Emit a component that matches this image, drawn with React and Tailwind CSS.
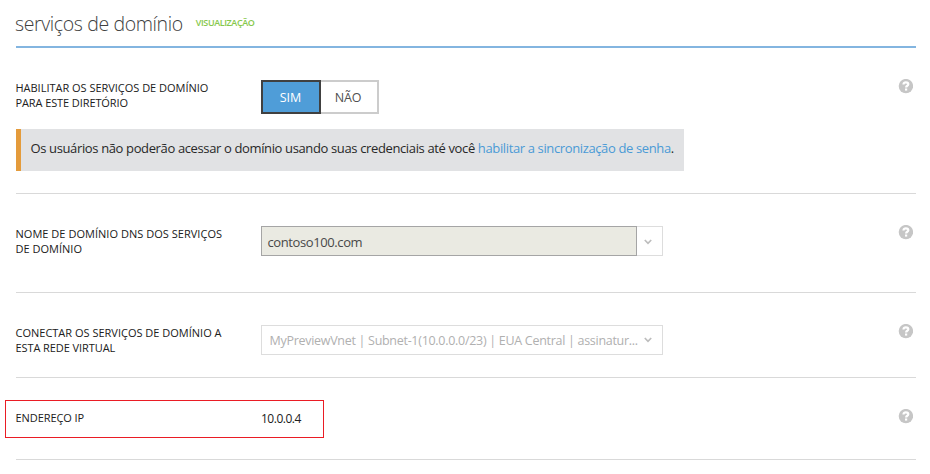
const Help = () => (
  <svg className="mt-[31px] mr-[3px] ml-auto h-[15px] w-[15px] shrink-0" viewBox="0 0 15 15">
    <circle cx="7.9" cy="7.1" r="7.2" fill="#c6c6c6" />
    <path d="M5.5 5.5C5.5 4 6.4 3.3 7.9 3.3s2.4.7 2.4 1.9c0 1.6-2.2 1.5-2.2 3.2" fill="none" stroke="#fff" strokeWidth="2.2" />
    <rect x="7" y="9.5" width="2.2" height="2.1" fill="#fff" />
  </svg>
);

const Chevron = () => (
  <svg className="h-[6px] w-[8px] shrink-0" viewBox="0 0 8 6">
    <path d="M.8 1 4 4.3 7.2 1" fill="none" stroke="#bdbdbd" strokeWidth="1.7" />
  </svg>
);

const Label = ({ children }) => (
  <div className="-ml-[0.5px] w-[245.5px] shrink-0 pt-8 text-[11px] leading-[15px] whitespace-nowrap text-[#202020]">
    {children}
  </div>
);

export default function App() {
  return (
    <main className="h-[474px] w-[930px] overflow-hidden bg-white pr-[14px] pl-4 font-['Open_Sans','Noto_Sans',sans-serif]">
      <header className="flex h-12 border-b-2 border-[#83b5e0]">
        <h1 className="mt-[11px] -ml-px text-[19.5px] leading-[26px] font-light tracking-[-0.38px] whitespace-nowrap text-[#404040]">serviços de domínio</h1>
        <span className="mt-[17px] ml-[13px] text-[9px] leading-[12px] font-semibold tracking-[-0.4px] text-[#86c84c]">VISUALIZAÇÃO</span>
      </header>

      <section className="h-[146px] border-b border-[#d9d9d9]">
        <div className="flex h-[81px]">
          <Label>
            <span className="tracking-[-0.02px]">HABILITAR OS SERVIÇOS DE DOMÍNIO</span>
            <br />
            <span className="tracking-[-0.1px]">PARA ESTE DIRETÓRIO</span>
          </Label>
          <div className="mt-8 flex h-[34px] text-[12.5px]">
            <button className="w-[60px] border-2 border-[#404040] bg-[#4f9dd8] pt-[2px] pr-px text-white">SIM</button>
            <button className="w-[58px] border-2 border-l-0 border-[#cccccc] bg-white pt-[2px] pr-[2px] tracking-[-0.1px] text-[#505050]">NÃO</button>
          </div>
          <Help />
        </div>
        <div className="flex h-[42px] w-[668px] items-center border-l-[5px] border-[#e49b3b] bg-[#e1e2e4] pb-[2px] pl-[9.5px] text-[13px] whitespace-nowrap text-[#282828]">
          <span className="tracking-[-0.367px]">Os usuários não poderão acessar o domínio usando suas credenciais até você&nbsp;</span>
          <a className="tracking-[-0.37px] text-[#4a9ad6]">habilitar a sincronização de senha</a>.
        </div>
      </section>

      <section className="flex h-[99px] border-b border-[#d9d9d9]">
        <Label>
          <span className="tracking-[0.03px]">NOME DE DOMÍNIO DNS DOS SERVIÇOS</span>
          <br />
          <span className="tracking-[0.01px]">DE DOMÍNIO</span>
        </Label>
        <div className="mt-8 flex h-[30px] w-[402px] text-[13px] text-[#484848]">
          <div className="flex w-[376px] items-center border border-[#a5a5a5] bg-[#eaeae2] pt-[3px] pl-[5.5px]">
            <span className="tracking-[-0.4px]">contoso100.com</span>
          </div>
          <div className="flex w-[26px] items-center border border-l-0 border-[#dddddd] pt-px pl-[7px]">
            <Chevron />
          </div>
        </div>
        <Help />
      </section>

      <section className="flex h-[85px] border-b border-[#d9d9d9]">
        <Label>
          <span className="tracking-[0px]">CONECTAR OS SERVIÇOS DE DOMÍNIO A</span>
          <br />
          <span className="tracking-[-0.08px]">ESTA REDE VIRTUAL</span>
        </Label>
        <div className="mt-8 flex h-[30px] w-[402px] items-center justify-between border border-[#dddddd] pr-[10px] pl-[7.5px] text-[12.5px] whitespace-nowrap text-[#b0b0b0]">
          <span className="pt-[3px] tracking-[-0.29px]">MyPreviewVnet | Subnet-1(10.0.0.0/23) | EUA Central | assinatur...</span>
          <Chevron />
        </div>
        <Help />
      </section>

      <section className="relative flex h-[82px] border-b border-[#d9d9d9]">
        <div className="absolute top-[22px] -left-[11px] h-[38px] w-[319px] border border-[#ea1c24]" />
        <Label>
          <span className="tracking-[-0.08px]">ENDEREÇO IP</span>
        </Label>
        <span className="pt-[33px] text-[12px] leading-4 tracking-[-0.5px] text-[#202020]">10.0.0.4</span>
        <Help />
      </section>
    </main>
  );
}
